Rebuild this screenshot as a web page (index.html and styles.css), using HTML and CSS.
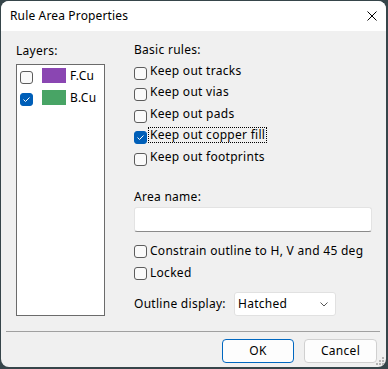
FILE: index.html
```html
<!DOCTYPE html>
<html>
<head>
<meta charset="utf-8">
<link rel="stylesheet" href="styles.css">
</head>
<body>
<div class="window">
  <div class="titlebar">
    <span class="title">Rule Area Properties</span>
    <svg class="close" width="10" height="10" viewBox="0 0 10 10"><path d="M0.5 0.5L9.5 9.5M9.5 0.5L0.5 9.5" stroke="#000" stroke-width="1" fill="none"/></svg>
  </div>
  <div class="content">
    <div class="left">
      <div class="label">Layers:</div>
      <div class="listbox">
        <div class="layer"><span class="cb"></span><span class="swatch fcu"></span><span class="lname">F.Cu</span></div>
        <div class="layer"><span class="cb checked"><svg width="11" height="11" viewBox="0 0 11 11"><path d="M2.5 5.5L4.5 7.5L8.5 3.5" stroke="#fff" stroke-width="1" fill="none"/></svg></span><span class="swatch bcu"></span><span class="lname">B.Cu</span></div>
      </div>
    </div>
    <div class="right">
      <div class="label">Basic rules:</div>
      <div class="rules">
        <div class="rule"><span class="cb"></span><span class="txt">Keep out tracks</span></div>
        <div class="rule"><span class="cb"></span><span class="txt">Keep out vias</span></div>
        <div class="rule"><span class="cb"></span><span class="txt">Keep out pads</span></div>
        <div class="rule"><span class="cb checked"><svg width="11" height="11" viewBox="0 0 11 11"><path d="M2.5 5.5L4.5 7.5L8.5 3.5" stroke="#fff" stroke-width="1" fill="none"/></svg></span><span class="txt focus">Keep out copper fill</span></div>
        <div class="rule"><span class="cb"></span><span class="txt">Keep out footprints</span></div>
      </div>
      <div class="label area-label">Area name:</div>
      <div class="input"></div>
      <div class="opt first"><span class="cb"></span><span class="txt">Constrain outline to H, V and 45 deg</span></div>
      <div class="opt"><span class="cb"></span><span class="txt">Locked</span></div>
      <div class="outline-row">
        <span class="outline-label">Outline display:</span>
        <div class="select"><span>Hatched</span><svg width="8" height="5" viewBox="0 0 8 5"><path d="M0.5 0.5L4 4L7.5 0.5" stroke="#555" stroke-width="1" fill="none"/></svg></div>
      </div>
    </div>
  </div>
  <div class="separator"></div>
  <div class="footer">
    <button class="btn ok">OK</button>
    <button class="btn cancel">Cancel</button>
  </div>
  <svg class="grip" width="9" height="9" viewBox="0 0 9 9">
    <rect x="6" y="0" width="2" height="2" fill="#b4b4b4"/>
    <rect x="3" y="3" width="2" height="2" fill="#b4b4b4"/>
    <rect x="6" y="3" width="2" height="2" fill="#b4b4b4"/>
    <rect x="0" y="6" width="2" height="2" fill="#b4b4b4"/>
    <rect x="3" y="6" width="2" height="2" fill="#b4b4b4"/>
    <rect x="6" y="6" width="2" height="2" fill="#b4b4b4"/>
  </svg>
</div>
</body>
</html>
```

FILE: styles.css
```css
html, body {
  margin: 0;
  padding: 0;
}
body {
  width: 388px;
  height: 369px;
  overflow: hidden;
  background: #36454a;
  font-family: "Noto Sans", "Liberation Sans", sans-serif;
  font-size: 12px;
  line-height: 16px;
  letter-spacing: 0.28px;
  color: #000;
}
.window {
  margin: 1px 0 0 1px;
  width: 385px;
  height: 366px;
  border-radius: 8px;
  background: #f0f0f0;
  display: flex;
  flex-direction: column;
  position: relative;
  overflow: hidden;
}
.titlebar {
  height: 30px;
  flex: none;
  box-sizing: border-box;
  background: #fff;
  display: flex;
  align-items: flex-start;
  justify-content: space-between;
  padding: 7px 9px 0 9px;
}
.title {
  letter-spacing: 0.15px;
}
.close {
  margin-top: 3px;
  display: block;
}
.content {
  flex: 1;
  display: flex;
  gap: 29px;
  padding: 11px 0 0 15px;
}
.left {
  width: 89px;
  padding-top: 1px;
  display: flex;
  flex-direction: column;
}
.listbox {
  margin-top: 5px;
  height: 252px;
  box-sizing: border-box;
  border: 1px solid #6b6b6b;
  background: #fff;
  padding: 3px 0 0 3px;
}
.layer {
  display: flex;
  align-items: flex-start;
  height: 22px;
}
.cb {
  flex: none;
  width: 13px;
  height: 13px;
  box-sizing: border-box;
  border: 1px solid #5c5c5c;
  border-radius: 3px;
  background: #fafafa;
  display: flex;
  align-items: center;
  justify-content: center;
}
.cb.checked {
  background: #005fb8;
  border-color: #005fb8;
}
.cb svg {
  display: block;
}
.layer .cb {
  margin-top: 3px;
}
.swatch {
  flex: none;
  width: 24px;
  height: 15px;
  margin-left: 9px;
}
.fcu {
  background: #8a46b2;
}
.bcu {
  background: #48a465;
}
.lname {
  margin-left: 4px;
}
.right {
  width: 238px;
  display: flex;
  flex-direction: column;
}
.rules {
  margin-top: 5px;
  display: flex;
  flex-direction: column;
}
.rule {
  display: flex;
  align-items: flex-start;
  height: 21px;
}
.rule:nth-child(2n) {
  height: 22px;
}
.rule .cb {
  margin-top: 4px;
}
.txt {
  margin-left: 1px;
  border: 1px solid transparent;
  padding: 0 1px;
  line-height: 14px;
  white-space: nowrap;
}
.txt.focus {
  border: 1px dotted #000;
}
.area-label {
  margin-top: 19px;
}
.input {
  margin-top: 2px;
  height: 25px;
  box-sizing: border-box;
  background: #fff;
  border: 1px solid #e3e3e3;
  border-bottom-color: #8a8a8a;
  border-radius: 3px;
}
.opt {
  display: flex;
  align-items: flex-start;
  height: 22px;
}
.opt.first {
  margin-top: 11px;
}
.opt .cb {
  margin-top: 2px;
}
.outline-row {
  margin-top: 5px;
  height: 24px;
  display: flex;
  align-items: center;
}
.outline-label {
  width: 100px;
  flex: none;
}
.select {
  width: 102px;
  height: 24px;
  box-sizing: border-box;
  background: #fff;
  border: 1px solid #e1e1e1;
  border-radius: 3px;
  display: flex;
  align-items: center;
  justify-content: space-between;
  padding: 0 7px 0 3px;
}
.select svg {
  display: block;
}
.separator {
  flex: none;
  height: 1px;
  margin: 0 6px 0 5px;
  background: #a0a0a0;
}
.footer {
  flex: none;
  height: 35px;
  box-sizing: border-box;
  display: flex;
  justify-content: flex-end;
  gap: 10px;
  padding: 7px 9px 0 0;
}
.btn {
  height: 24px;
  box-sizing: border-box;
  background: #fdfdfd;
  border: 1px solid #d0d0d0;
  border-radius: 4px;
  font-family: "Noto Sans", "Liberation Sans", sans-serif;
  font-size: 12px;
  line-height: 16px;
  letter-spacing: 0.28px;
  color: #000;
  padding: 0;
}
.ok {
  width: 72px;
  border-color: #0067c0;
}
.cancel {
  width: 73px;
}
.grip {
  position: absolute;
  right: 1px;
  bottom: 1px;
  display: block;
}
```
